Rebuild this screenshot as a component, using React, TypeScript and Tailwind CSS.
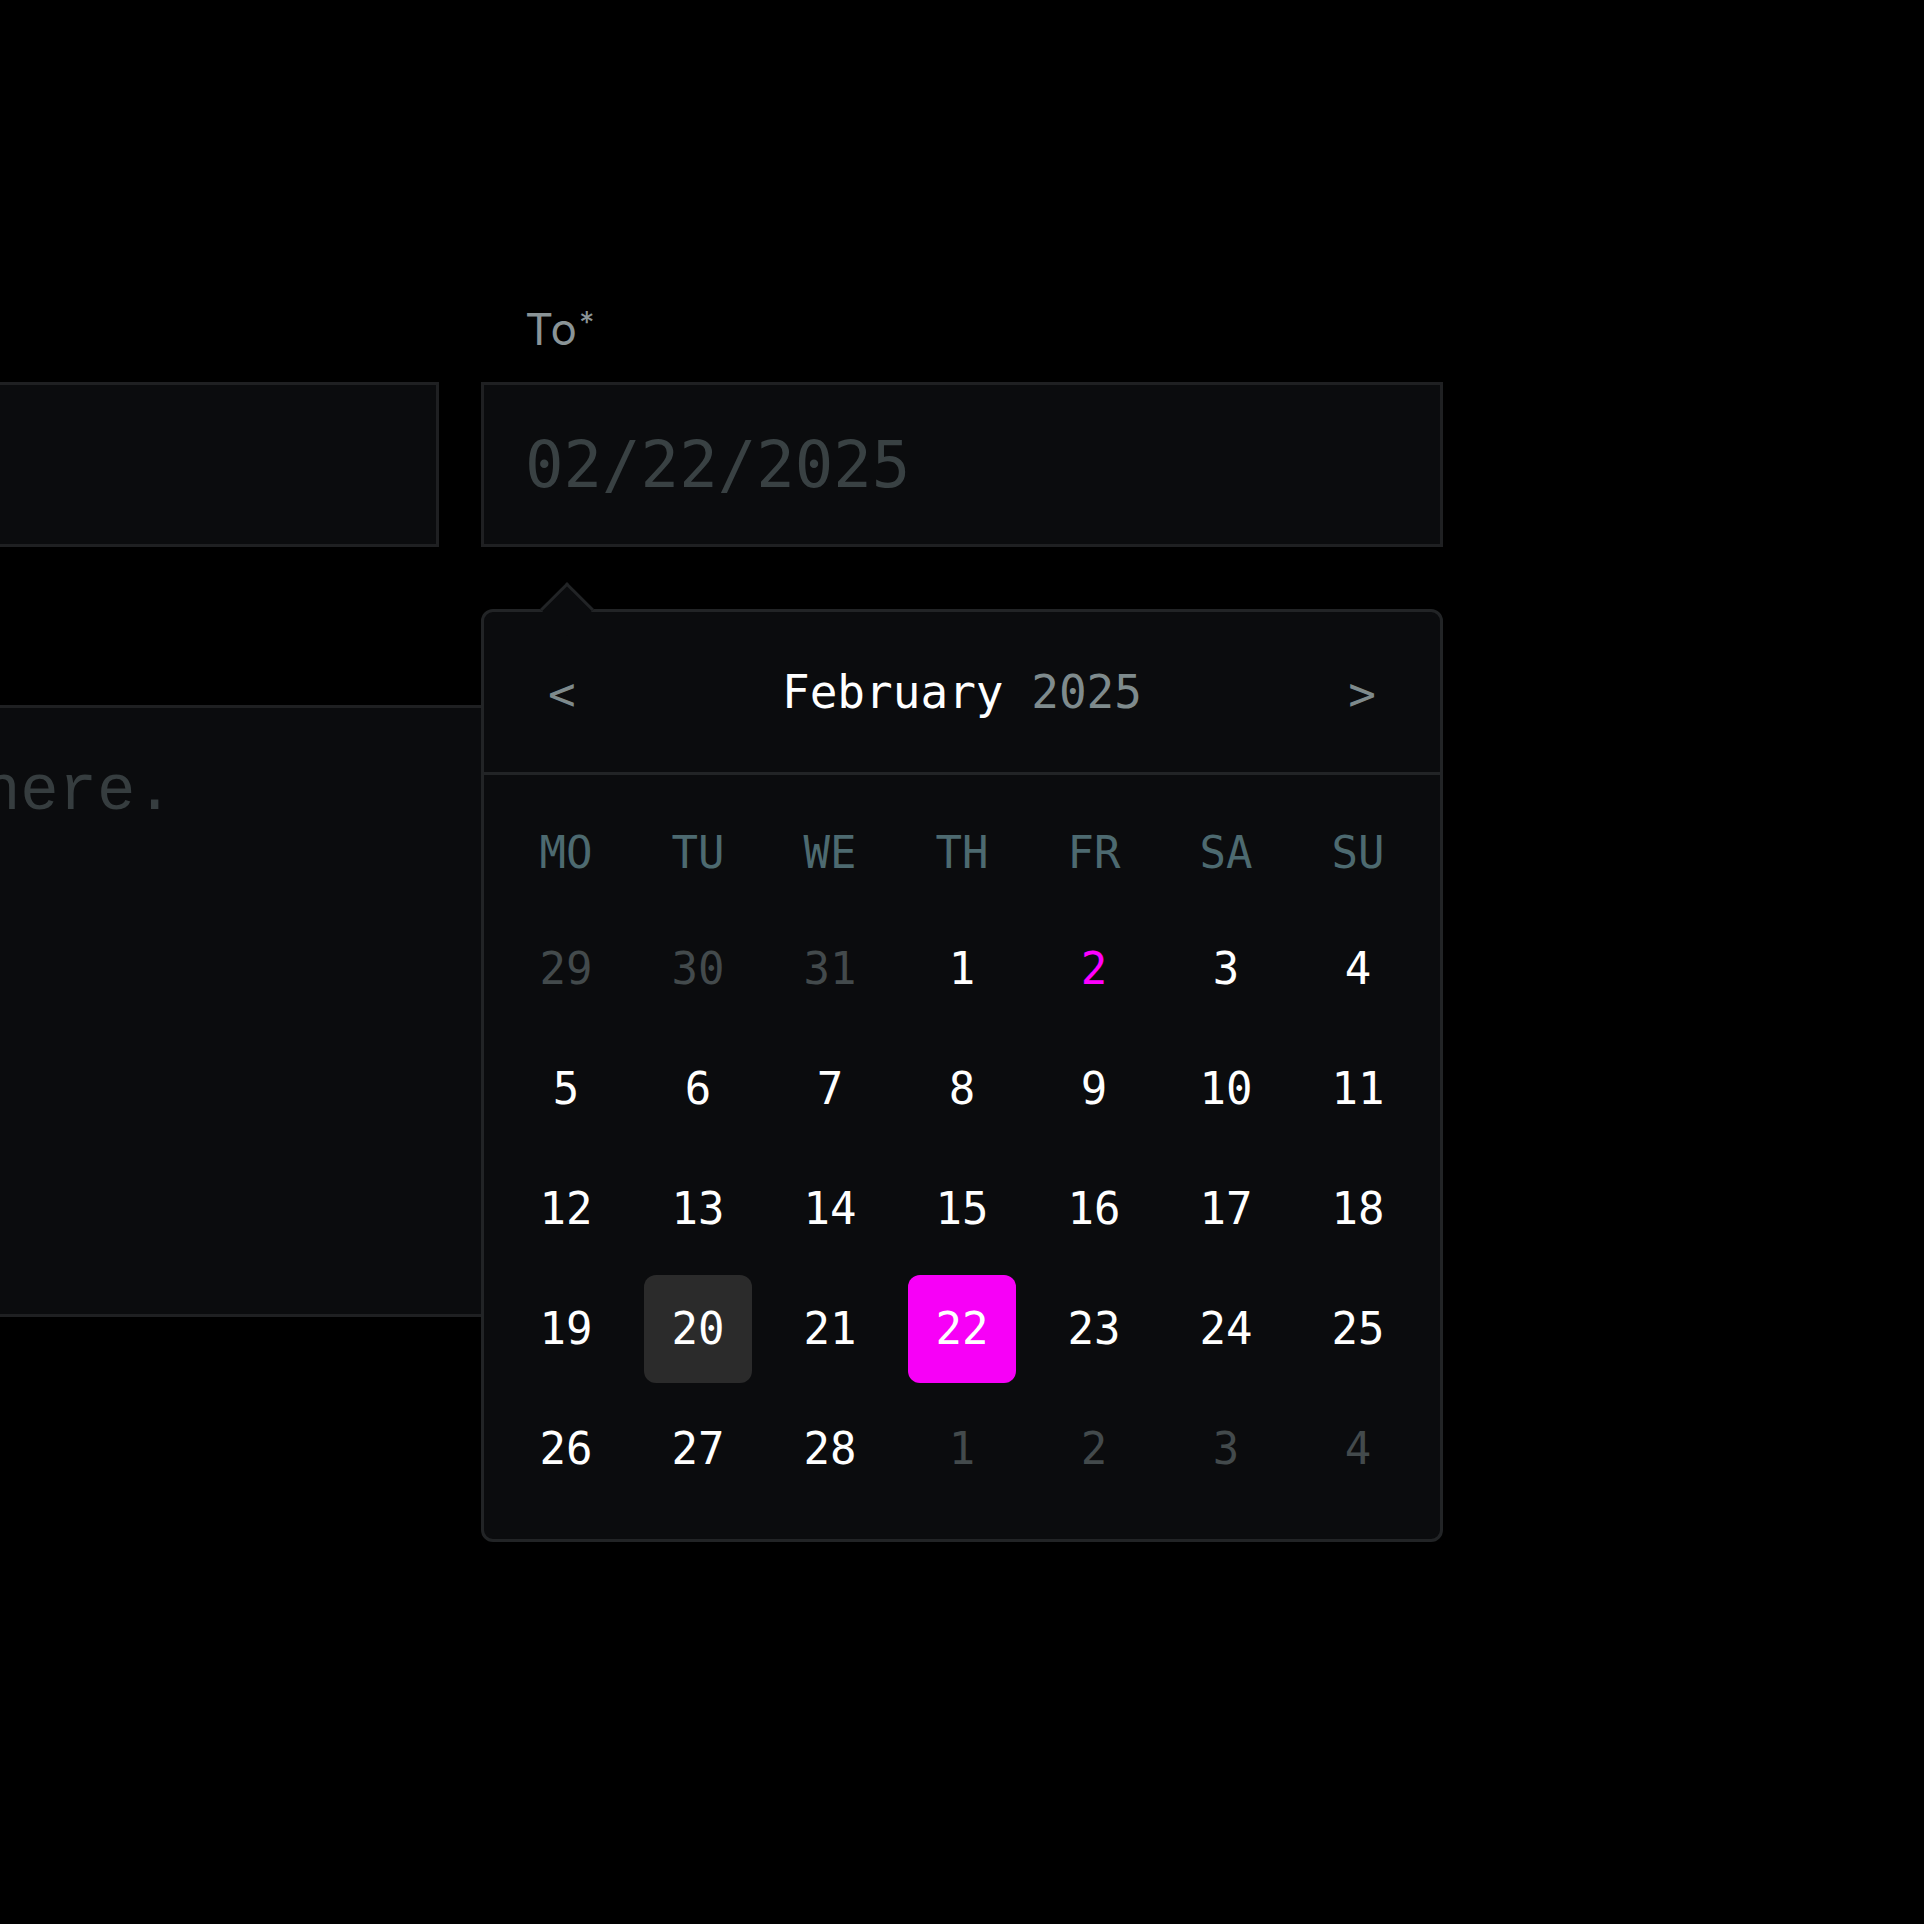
import React from 'react';

type Day = { n: number; muted?: boolean };

const weekdays = ['MO', 'TU', 'WE', 'TH', 'FR', 'SA', 'SU'];

const weeks: Day[][] = [
  [{ n: 29, muted: true }, { n: 30, muted: true }, { n: 31, muted: true }, { n: 1 }, { n: 2 }, { n: 3 }, { n: 4 }],
  [5, 6, 7, 8, 9, 10, 11].map((n) => ({ n })),
  [12, 13, 14, 15, 16, 17, 18].map((n) => ({ n })),
  [19, 20, 21, 22, 23, 24, 25].map((n) => ({ n })),
  [{ n: 26 }, { n: 27 }, { n: 28 }, { n: 1, muted: true }, { n: 2, muted: true }, { n: 3, muted: true }, { n: 4, muted: true }],
];

const TODAY = 2;
const HOVER = 20;
const SELECTED = 22;

function Label({ text }: { text: string }) {
  return (
    <label className="block pl-[44px] h-[52px] leading-[52px] text-[44px] text-[#8a9497] font-['Inter','Liberation_Sans',sans-serif] tracking-[0.5px]">
      {text}
      <span className="inline-block align-top text-[30px] leading-none ml-[2px] relative top-[4px]">*</span>
    </label>
  );
}

function DayCell({ day }: { day: Day }) {
  const current = !day.muted;
  let cls = 'text-white';
  if (day.muted) cls = 'text-[#434a4c]';
  else if (day.n === TODAY) cls = 'text-[#ff00ff]';

  let bg = '';
  if (current && day.n === HOVER) bg = 'bg-[#2b2b2b]';
  if (current && day.n === SELECTED) bg = 'bg-[#f700f7] !text-white';

  return (
    <button
      type="button"
      className={`h-[108px] w-[108px] rounded-[12px] flex items-center justify-center text-[44px] leading-none ${cls} ${bg}`}
    >
      {day.n}
    </button>
  );
}

function Calendar() {
  return (
    <div className="absolute left-0 top-[306px] z-20 w-[962px] h-[933px] rounded-[12px] border-[3px] border-[#222426] bg-[#0b0c0e] font-['DejaVu_Sans_Mono',monospace]">
      {/* pointer */}
      <div className="absolute left-[64px] top-[-22px] w-[38px] h-[38px] rotate-45 bg-[#0b0c0e] border-t-[3px] border-l-[3px] border-[#222426]" />

      <div className="relative h-[163px] flex items-center justify-between px-[64px] border-b-[3px] border-[#222426]">
        <button type="button" className="text-[46px] text-[#7e8a8c] leading-none pt-[4px]">&lt;</button>
        <div className="text-[46px] leading-none">
          <span className="text-white">February</span>{' '}
          <span className="text-[#7f8b8d]">2025</span>
        </div>
        <button type="button" className="text-[46px] text-[#7e8a8c] leading-none pt-[4px]">&gt;</button>
      </div>

      <div className="px-[28px] pt-[24px]">
        <div className="grid grid-cols-7 gap-x-[24px] h-[108px] items-center">
          {weekdays.map((w) => (
            <div key={w} className="text-center text-[44px] leading-none text-[#4d6a70]">
              {w}
            </div>
          ))}
        </div>
        <div className="mt-[8px] grid grid-cols-7 gap-x-[24px] gap-y-[12px]">
          {weeks.flat().map((d, i) => (
            <DayCell key={i} day={d} />
          ))}
        </div>
      </div>
    </div>
  );
}

export default function App() {
  return (
    <div className="w-full h-[1924px] bg-black overflow-hidden">
      <div className="ml-[-523px] w-[1966px] pt-[303px]">
        <div className="grid grid-cols-2 gap-x-[42px]">
          <div>
            <Label text="From" />
            <div className="mt-[27px] h-[165px] border-[3px] border-[#1f2022] bg-[#0b0c0e] flex items-center px-[41px]">
              <input
                className="w-full bg-transparent outline-none text-[64px] text-[#c8cdce] placeholder:text-[#394143] font-['DejaVu_Sans_Mono',monospace]"
                placeholder="02/18/2025"
              />
            </div>
          </div>
          <div className="relative">
            <Label text="To" />
            <div className="mt-[27px] h-[165px] border-[3px] border-[#1f2022] bg-[#0b0c0e] flex items-center px-[41px]">
              <input
                className="w-full bg-transparent outline-none text-[64px] text-[#c8cdce] placeholder:text-[#394143] font-['DejaVu_Sans_Mono',monospace]"
                placeholder="02/22/2025"
              />
            </div>
            <Calendar />
          </div>
        </div>

        <div className="mt-[54px]">
          <Label text="Message" />
          <textarea
            className="mt-[52px] block w-full h-[612px] resize-none border-[3px] border-[#1f2022] bg-[#0b0c0e] px-[41px] py-[41px] outline-none text-[64px] leading-[1.35] text-[#c8cdce] placeholder:text-[#363d3f] font-['Liberation_Mono',monospace]"
            placeholder="Add details here."
          />
        </div>
      </div>
    </div>
  );
}
